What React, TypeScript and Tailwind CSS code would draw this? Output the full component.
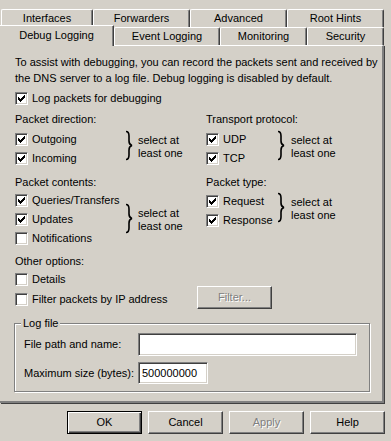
import React from 'react';

// Win2000 style DNS server properties - Debug Logging page

const Tick = () => (
  <svg width="7" height="7" viewBox="0 0 7 7" shapeRendering="crispEdges">
    <path
      d="M0 2h1v3H0zM1 3h1v3H1zM2 4h1v3H2zM3 3h1v3H3zM4 2h1v3H4zM5 1h1v3H5zM6 0h1v3H6z"
      fill="#000"
    />
  </svg>
);

const Brace = () => (
  <svg width="8" height="31" viewBox="0 0 8 31">
    <path
      d="M1 1.5C3.5 1.5 4 3 4 6v5c0 2.5 1 4 3 4.5C5 16 4 17.5 4 20v5c0 3-0.5 4.5-3 4.5"
      fill="none"
      stroke="#000"
      strokeWidth="1.6"
    />
  </svg>
);

const CheckRow = ({ label, checked }: { label: string; checked?: boolean }) => (
  <div className="flex h-[13px] items-center gap-[4px] whitespace-nowrap">
    <span className="flex h-[13px] w-[13px] shrink-0 items-center justify-center border border-t-[#808080] border-l-[#808080] border-b-white border-r-white bg-white shadow-[inset_1px_1px_0_#404040,inset_-1px_-1px_0_#d4d0c8]">
      {checked && <Tick />}
    </span>
    <span>{label}</span>
  </div>
);

interface GroupProps {
  label: string;
  items: { label: string; checked?: boolean }[];
  listClass: string;
  braceClass: string;
  textClass: string;
  className?: string;
}

const Group = ({ label, items, listClass, braceClass, textClass, className }: GroupProps) => (
  <div className={className}>
    <div className="h-[13px] whitespace-nowrap">{label}</div>
    <div className={`flex items-start ${listClass}`}>
      <div className="flex shrink-0 flex-col gap-[6px]">
        {items.map((it) => (
          <CheckRow key={it.label} label={it.label} checked={it.checked} />
        ))}
      </div>
      <div className={braceClass}>
        <Brace />
      </div>
      <div className={`whitespace-nowrap ${textClass}`}>
        select at
        <br />
        least one
      </div>
    </div>
  </div>
);

const Tab = ({ label, className }: { label: string; className: string }) => (
  <div
    className={`flex h-[18px] items-center justify-center rounded-t-[2px] border-t border-l border-r border-t-white border-l-white border-r-[#404040] shadow-[inset_-1px_0_0_#808080] whitespace-nowrap ${className}`}
  >
    {label}
  </div>
);

const Button = ({ label, isDefault, disabled }: { label: string; isDefault?: boolean; disabled?: boolean }) => (
  <div
    className={`flex h-[23px] w-[75px] items-center justify-center ${
      isDefault
        ? 'border border-black shadow-[inset_1px_1px_0_#fff,inset_-1px_-1px_0_#404040,inset_-2px_-2px_0_#808080]'
        : 'border border-t-white border-l-white border-b-[#404040] border-r-[#404040] shadow-[inset_-1px_-1px_0_#808080]'
    } ${disabled ? 'text-[#808080] [text-shadow:1px_1px_0_#fff]' : ''}`}
  >
    {label}
  </div>
);

const Field = ({ value, className }: { value?: string; className: string }) => (
  <div
    className={`flex items-center border border-t-[#808080] border-l-[#808080] border-b-white border-r-white bg-white pl-[3px] shadow-[inset_1px_1px_0_#404040,inset_-1px_-1px_0_#d4d0c8] ${className}`}
  >
    {value}
  </div>
);

export default function App() {
  return (
    <div className="h-[441px] w-[391px] overflow-hidden bg-[#d4d0c8] font-['Liberation_Sans',Arial,sans-serif] text-[11px] leading-[13px] text-black">
      {/* tabs */}
      <div className="flex w-[384px] pl-[1px] pt-[9px]">
        <Tab label="Interfaces" className="w-[92px]" />
        <Tab label="Forwarders" className="w-[97px]" />
        <Tab label="Advanced" className="w-[97px]" />
        <Tab label="Root Hints" className="w-[97px]" />
      </div>
      <div className="flex h-[18px] w-[384px] items-end">
        <div className="relative z-10 -mb-[1px] flex h-[21px] w-[114px] items-center justify-center border-t border-r border-t-white border-r-[#404040] bg-[#d4d0c8] pb-[2px] shadow-[inset_-1px_0_0_#808080]">
          Debug Logging
        </div>
        <Tab label="Event Logging" className="w-[106px]" />
        <Tab label="Monitoring" className="w-[87px]" />
        <Tab label="Security" className="w-[77px]" />
      </div>

      {/* page */}
      <div className="h-[358px] w-[384px] border-t border-r-2 border-b-2 border-t-white border-r-[#808080] border-b-[#808080] pl-[15px] pt-[8px] shadow-[1px_1px_0_#404040]">
        <p className="whitespace-nowrap leading-[16px]">
          To assist with debugging, you can record the packets sent and received by
          <br />
          the DNS server to a log file. Debug logging is disabled by default.
        </p>
        <div className="mt-[6px]">
          <CheckRow label="Log packets for debugging" checked />
        </div>

        <div className="mt-[8px] grid grid-cols-[191px_1fr]">
          <div>
            <Group
              label="Packet direction:"
              items={[
                { label: 'Outgoing', checked: true },
                { label: 'Incoming', checked: true },
              ]}
              listClass="mt-[7px] [&>div:first-child]:w-[110px]"
              braceClass="-mt-[3px]"
              textClass="ml-[5px] mt-[1px]"
            />
            <Group
              className="mt-[11px]"
              label="Packet contents:"
              items={[
                { label: 'Queries/Transfers', checked: true },
                { label: 'Updates', checked: true },
                { label: 'Notifications' },
              ]}
              listClass="mt-[5px] [&>div:first-child]:w-[110px]"
              braceClass="mt-[9px]"
              textClass="ml-[5px] mt-[13px]"
            />
          </div>
          <div>
            <Group
              label="Transport protocol:"
              items={[
                { label: 'UDP', checked: true },
                { label: 'TCP', checked: true },
              ]}
              listClass="mt-[7px] [&>div:first-child]:w-[71px]"
              braceClass="-mt-[3px]"
              textClass="ml-[6px] mt-[1px]"
            />
            <Group
              className="mt-[11px]"
              label="Packet type:"
              items={[
                { label: 'Request', checked: true },
                { label: 'Response', checked: true },
              ]}
              listClass="mt-[6px] [&>div:first-child]:w-[71px]"
              braceClass="-mt-[3px]"
              textClass="ml-[6px] mt-[1px]"
            />
          </div>
        </div>

        <div className="mt-[10px] h-[13px]">Other options:</div>
        <div className="mt-[5px]">
          <CheckRow label="Details" />
        </div>
        <div className="mt-[7px] flex items-start">
          <div className="w-[182px]">
            <CheckRow label="Filter packets by IP address" />
          </div>
          <div className="-mt-[7px]">
            <Button label="Filter..." disabled />
          </div>
        </div>

        {/* log file group */}
        <div className="relative -ml-[1px] mt-[14px] w-[356px] border border-[#808080] pb-[7px] pl-[9px] pt-[9px] shadow-[1px_1px_0_#fff,inset_1px_1px_0_#fff]">
          <div className="absolute -top-[7px] left-[6px] bg-[#d4d0c8] px-[2px]">Log file</div>
          <div className="flex items-center">
            <div className="w-[114px] whitespace-nowrap">File path and name:</div>
            <Field className="h-[23px] w-[219px]" />
          </div>
          <div className="mt-[6px] flex items-center">
            <div className="w-[114px] whitespace-nowrap">Maximum size (bytes):</div>
            <Field className="h-[22px] w-[70px]" value="500000000" />
          </div>
        </div>
      </div>

      {/* dialog buttons */}
      <div className="mt-[8px] flex justify-end gap-[6px] pr-[6px]">
        <Button label="OK" isDefault />
        <Button label="Cancel" />
        <Button label="Apply" disabled />
        <Button label="Help" />
      </div>
    </div>
  );
}
